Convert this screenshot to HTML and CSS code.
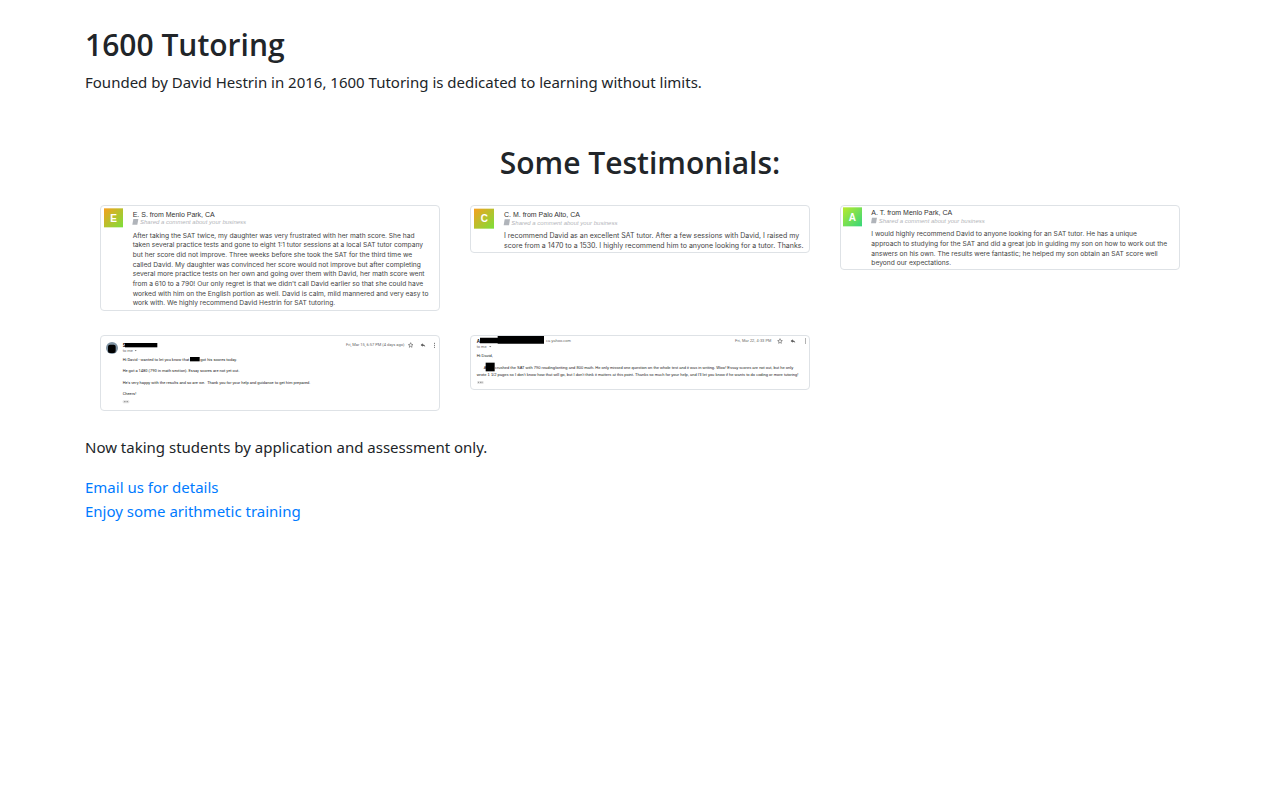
FILE: index.html
```html
<!DOCTYPE html>
<html lang="en">
<head>
  <meta charset="utf-8">
  <meta name="viewport" content="width=device-width, initial-scale=1">
  <title>1600 Tutoring</title>
  <link rel="stylesheet" href="styles.css">
</head>
<body>
  <div class="container">
    <h2>1600 Tutoring</h2>
    <p>Founded by David Hestrin in 2016, 1600 Tutoring is dedicated to learning without limits.</p>

    <h2 class="section-title">Some Testimonials:</h2>
    <div class="testimonials">
      <svg class="thumbnail" viewBox="0 0 1014 312">
        <defs>
          <linearGradient id="orange" x1="0" y1="0" x2="1" y2="1">
            <stop offset="0" stop-color="#f6a01e"/>
            <stop offset="1" stop-color="#7be03a"/>
          </linearGradient>
          <linearGradient id="green" x1="0" y1="0" x2="1" y2="1">
            <stop offset="0" stop-color="#b9ea2c"/>
            <stop offset="1" stop-color="#35d67c"/>
          </linearGradient>
        </defs>
        <rect x="9" y="7" width="57" height="57" fill="url(#orange)"/>
        <text class="initial" x="38" y="47">E</text>
        <text class="name" x="95" y="32">E. S. from Menlo Park, CA</text>
        <path class="note" d="M97 39h15l-3 17h-15z"/>
        <text class="shared" x="117" y="54">Shared a comment about your business</text>
        <text class="quote">
          <tspan x="95" y="95">After taking the SAT twice, my daughter was very frustrated with her math score. She had</tspan>
          <tspan x="95" y="124">taken several practice tests and gone to eight 1:1 tutor sessions at a local SAT tutor company</tspan>
          <tspan x="95" y="153">but her score did not improve. Three weeks before she took the SAT for the third time we</tspan>
          <tspan x="95" y="182">called David. My daughter was convinced her score would not improve but after completing</tspan>
          <tspan x="95" y="211">several more practice tests on her own and going over them with David, her math score went</tspan>
          <tspan x="95" y="240">from a 610 to a 790! Our only regret is that we didn't call David earlier so that she could have</tspan>
          <tspan x="95" y="269">worked with him on the English portion as well. David is calm, mild mannered and very easy to</tspan>
          <tspan x="95" y="298">work with. We highly recommend David Hestrin for SAT tutoring.</tspan>
        </text>
      </svg>

      <svg class="thumbnail" viewBox="0 0 1014 138">
        <rect x="9" y="8" width="60" height="60" fill="url(#orange)"/>
        <text class="initial" x="40" y="49">C</text>
        <text class="name" x="99" y="32">C. M. from Palo Alto, CA</text>
        <path class="note" d="M101 40h16l-3 18h-16z"/>
        <text class="shared" x="121" y="57">Shared a comment about your business</text>
        <text class="quote quote-large">
          <tspan x="99" y="97">I recommend David as an excellent SAT tutor. After a few sessions with David, I raised my</tspan>
          <tspan x="99" y="126">score from a 1470 to a 1530. I highly recommend him to anyone looking for a tutor. Thanks.</tspan>
        </text>
      </svg>

      <svg class="thumbnail" viewBox="0 0 1014 189">
        <rect x="6" y="4" width="57" height="57" fill="url(#green)"/>
        <text class="initial" x="34" y="44">A</text>
        <text class="name" x="91" y="27">A. T. from Menlo Park, CA</text>
        <path class="note" d="M93 35h15l-3 17h-15z"/>
        <text class="shared" x="113" y="50">Shared a comment about your business</text>
        <text class="quote">
          <tspan x="91" y="91">I would highly recommend David to anyone looking for an SAT tutor. He has a unique</tspan>
          <tspan x="91" y="120">approach to studying for the SAT and did a great job in guiding my son on how to work out the</tspan>
          <tspan x="91" y="149">answers on his own. The results were fantastic; he helped my son obtain an SAT score well</tspan>
          <tspan x="91" y="178">beyond our expectations.</tspan>
        </text>
      </svg>

      <svg class="thumbnail mail" viewBox="0 0 1014 222">
        <circle cx="33" cy="36" r="18" fill="#7f93a3"/>
        <rect x="21" y="26" width="23" height="25" rx="6"/>
        <text class="mail-from" x="65" y="33">S</text>
        <rect x="72" y="21" width="97" height="13"/>
        <text class="mail-meta" x="65" y="48">to me</text>
        <path class="caret" d="M101 42h6l-3 4z"/>
        <text class="mail-meta" x="735" y="31">Fri, Mar 15, 6:57 PM (4 days ago)</text>
        <path class="icon" d="M929 20l2 5 5 1-4 3 1 5-4-3-4 3 1-5-4-3 5-1z"/>
        <path class="icon-solid" d="M959 27l6-5v3q7 0 8 8-3-4-8-4v3z"/>
        <path class="dots" d="M999 22h3M999 28h3M999 34h3"/>
        <text class="mail-body">
          <tspan x="65" y="75">Hi David - wanted to let you know that</tspan>
          <tspan x="298" y="75">got his scores today.</tspan>
          <tspan x="65" y="109">He got a 1480 (790 in math section). Essay scores are not yet out.</tspan>
          <tspan x="65" y="143">He's very happy with the results and so are we. &nbsp;Thank you for your help and guidance to get him prepared.</tspan>
          <tspan x="65" y="178">Cheers!</tspan>
        </text>
        <rect x="267" y="63" width="29" height="13"/>
        <rect class="pill" x="65" y="193" width="20" height="9" rx="3"/>
        <path class="dots" d="M69 197h2M74 197h2M79 197h2"/>
      </svg>

      <svg class="thumbnail mail mail-wide" viewBox="0 0 1014 159">
        <text class="mail-from" x="17" y="20">A</text>
        <path d="M27 5h53v-5h139v23h-139v-1h-53z"/>
        <text class="mail-meta" x="225" y="18">ca yahoo.com</text>
        <text class="mail-meta" x="17" y="36">to me</text>
        <path class="caret" d="M54 30h7l-3 4z"/>
        <text class="mail-meta" x="792" y="18">Fri, Mar 22, 4:33 PM</text>
        <path class="icon" d="M927 8l2 5 5 1-4 3 1 5-4-3-4 3 1-5-4-3 5-1z"/>
        <path class="icon-solid" d="M959 15l6-5v3q7 0 8 8-3-4-8-4v3z"/>
        <path class="dots" d="M1002 9h3M1002 15h3M1002 21h3"/>
        <text class="mail-body">
          <tspan x="17" y="63">Hi David,</tspan>
          <tspan x="38" y="100">A</tspan>
          <tspan x="72" y="100">crushed the SAT with 790 reading/writing and 800 math. He only missed one question on the whole test and it was in writing. Wow! Essay scores are not out, but he only</tspan>
          <tspan x="17" y="119">wrote 1 1/2 pages so I don't know how that will go, but I don't think it matters at this point. Thanks so much for your help, and I'll let you know if he wants to do coding or more tutoring!</tspan>
        </text>
        <rect x="44" y="80" width="27" height="26"/>
        <rect class="pill" x="18" y="135" width="20" height="9" rx="3"/>
        <path class="dots" d="M22 139h2M27 139h2M32 139h2"/>
      </svg>
    </div>

    <p>Now taking students by application and assessment only.</p>
    <a href="mailto:info@example.com">Email us for details</a><br>
    <a href="arithmetic.html">Enjoy some arithmetic training</a>
  </div>
</body>
</html>
```

FILE: styles.css
```css
* {
  box-sizing: border-box;
}
body {
  margin: 0;
  font-family: "Segoe UI", "Noto Sans", "Open Sans", sans-serif;
  font-size: 15px;
  line-height: 24px;
  color: #212529;
  background: #fff;
}
.container {
  max-width: 1140px;
  margin: 0 auto;
  padding: 26px 15px;
}
h2 {
  margin: 0 0 6px;
  font-family: "Segoe UI", "Open Sans", sans-serif;
  font-size: 30px;
  font-weight: 600;
  line-height: 38px;
}
p {
  margin: 0 0 16px;
}
a {
  color: #007bff;
  text-decoration: none;
}
a:hover {
  color: #0056b3;
  text-decoration: underline;
}
.section-title {
  margin-top: 50px;
  text-align: center;
}

/* testimonials */
.testimonials {
  display: grid;
  grid-template-columns: repeat(3, 1fr);
  align-items: start;
  gap: 24px 30px;
  padding: 17px 15px 24px;
}
.thumbnail {
  display: block;
  width: 100%;
  height: auto;
  border: 1px solid #dee2e6;
  border-radius: 4px;
  font-family: "Liberation Sans", Arial, sans-serif;
}
.initial {
  font-size: 30px;
  font-weight: bold;
  text-anchor: middle;
  fill: #fff;
}
.name {
  font-size: 21px;
  fill: #333;
}
.shared {
  font-size: 18px;
  font-style: italic;
  fill: #b4b6ba;
}
.note {
  fill: #b0b4ba;
}
.quote {
  font-family: Inter, "Liberation Sans", sans-serif;
  font-size: 20px;
  fill: #444;
}
.quote-large {
  font-size: 21px;
}

/* email screenshots */
.mail {
  font-family: Roboto, "Liberation Sans", sans-serif;
}
.mail-wide {
  font-family: "Liberation Sans", Arial, sans-serif;
}
.mail-from {
  font-size: 14px;
  font-weight: bold;
}
.mail-meta {
  font-size: 12px;
  fill: #666;
}
.mail-body {
  font-size: 12px;
  fill: #222;
}
.caret {
  fill: #777;
}
.icon {
  fill: none;
  stroke: #666;
  stroke-width: 2;
}
.icon-solid {
  fill: #555;
}
.dots {
  fill: none;
  stroke: #666;
  stroke-width: 3;
}
.pill {
  fill: #e4e4e4;
}

@media (max-width: 767px) {
  .testimonials {
    grid-template-columns: 1fr;
  }
}
```
